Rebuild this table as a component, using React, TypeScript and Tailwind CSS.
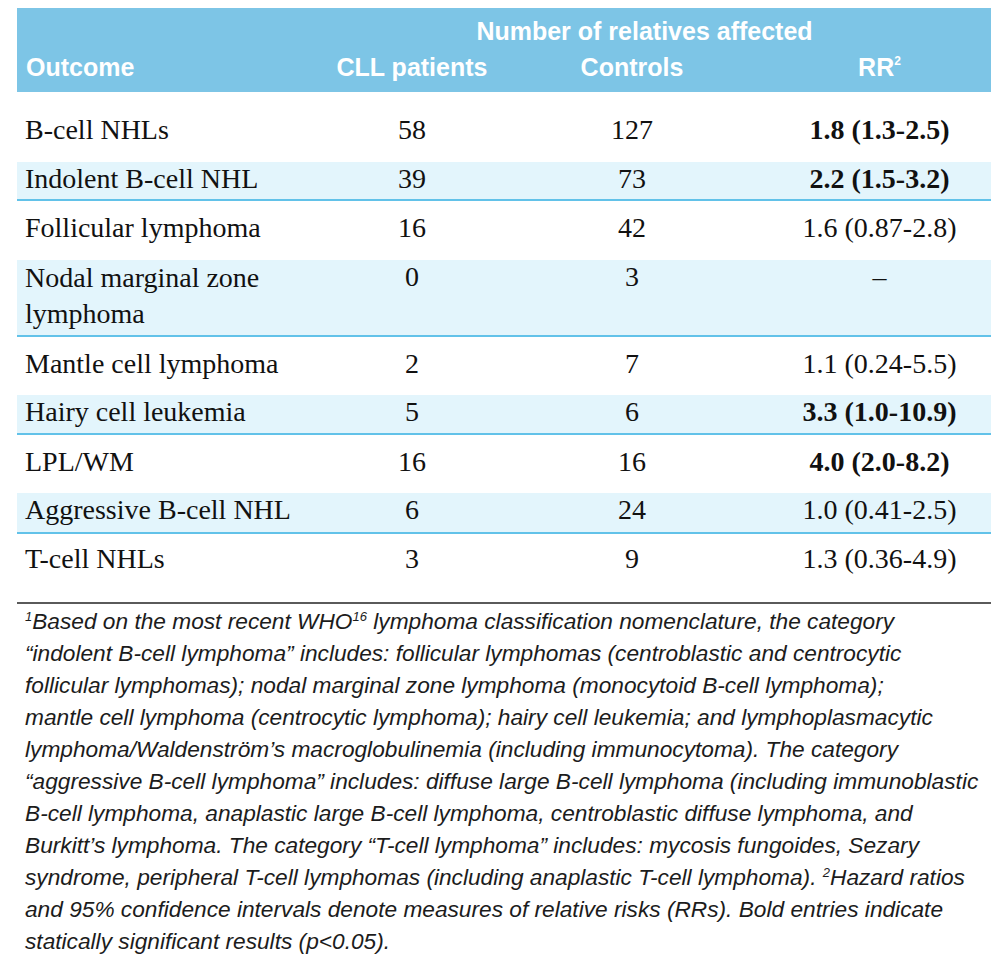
import React from 'react'

type Row = {
  outcome: string
  cll: string
  controls: string
  rr: string
  bold?: boolean
  rowClass: string
}

const rows: Row[] = [
  { outcome: 'B-cell NHLs', cll: '58', controls: '127', rr: '1.8 (1.3-2.5)', bold: true, rowClass: 'h-[70px] pt-[21px]' },
  { outcome: 'Indolent B-cell NHL', cll: '39', controls: '73', rr: '2.2 (1.5-3.2)', bold: true, rowClass: 'h-[39px] bg-[#e3f5fc] border-b-2 border-[#62c2e9]' },
  { outcome: 'Follicular lymphoma', cll: '16', controls: '42', rr: '1.6 (0.87-2.8)', rowClass: 'h-[59px] pt-[10px]' },
  { outcome: 'Nodal marginal zone lymphoma', cll: '0', controls: '3', rr: '\u2013', rowClass: 'h-[77px] bg-[#e3f5fc] border-b-2 border-[#62c2e9]' },
  { outcome: 'Mantle cell lymphoma', cll: '2', controls: '7', rr: '1.1 (0.24-5.5)', rowClass: 'h-[58px] pt-[10px]' },
  { outcome: 'Hairy cell leukemia', cll: '5', controls: '6', rr: '3.3 (1.0-10.9)', bold: true, rowClass: 'h-[40px] bg-[#e3f5fc] border-b-2 border-[#62c2e9]' },
  { outcome: 'LPL/WM', cll: '16', controls: '16', rr: '4.0 (2.0-8.2)', bold: true, rowClass: 'h-[58px] pt-[10px]' },
  { outcome: 'Aggressive B-cell NHL', cll: '6', controls: '24', rr: '1.0 (0.41-2.5)', rowClass: 'h-[41px] bg-[#e3f5fc] border-b-2 border-[#62c2e9]' },
  { outcome: 'T-cell NHLs', cll: '3', controls: '9', rr: '1.3 (0.36-4.9)', rowClass: 'h-[68px] pt-[8px]' },
]

const cols = 'grid grid-cols-[285px_220px_220px_245px]'

export default function App() {
  return (
    <div className="w-[1008px] h-[978px] bg-white px-[17px] pt-[8px] overflow-hidden">
      {/* header */}
      <div
        className={`${cols} bg-[#7dc5e6] text-white font-bold text-[25px] leading-[36px] pt-[5px] pb-[7px] font-['Liberation_Sans',Arial,sans-serif]`}
      >
        <div className="col-start-2 col-span-3 text-center">Number of relatives affected</div>
        <div className="pl-[9px]">Outcome</div>
        <div className="text-center">CLL patients</div>
        <div className="text-center">Controls</div>
        <div className="text-center pl-[30px]">
          RR<sup className="text-[12px] -top-[0.9em]">2</sup>
        </div>
      </div>

      {/* body */}
      <div className="font-['Liberation_Serif','Times_New_Roman',serif] text-[28px] leading-[34px] text-[#111]">
        {rows.map((r) => (
          <div key={r.outcome} className={`${cols} ${r.rowClass}`}>
            <div className={`pl-[8px] pr-[4px] ${r.outcome.length > 24 ? 'leading-[36px]' : ''}`}>{r.outcome}</div>
            <div className="text-center">{r.cll}</div>
            <div className="text-center">{r.controls}</div>
            <div className={`text-center pl-[30px] ${r.bold ? 'font-bold' : ''}`}>{r.rr}</div>
          </div>
        ))}
      </div>

      {/* footnote */}
      <div className="border-t-2 border-[#5a5a5a] pt-[1px] pl-[8px] font-['Liberation_Sans',Arial,sans-serif] italic text-[22.7px] leading-[32px] text-[#1c1c1c] whitespace-nowrap">
        <sup className="text-[13px] -top-[0.6em]">1</sup>Based on the most recent WHO<sup className="text-[13px] -top-[0.6em]">16</sup> lymphoma classification nomenclature, the category
        <br />
        “indolent B-cell lymphoma” includes: follicular lymphomas (centroblastic and centrocytic
        <br />
        follicular lymphomas); nodal marginal zone lymphoma (monocytoid B-cell lymphoma);
        <br />
        mantle cell lymphoma (centrocytic lymphoma); hairy cell leukemia; and lymphoplasmacytic
        <br />
        lymphoma/Waldenström’s macroglobulinemia (including immunocytoma). The category
        <br />
        “aggressive B-cell lymphoma” includes: diffuse large B-cell lymphoma (including immunoblastic
        <br />
        B-cell lymphoma, anaplastic large B-cell lymphoma, centroblastic diffuse lymphoma, and
        <br />
        Burkitt’s lymphoma. The category “T-cell lymphoma” includes: mycosis fungoides, Sezary
        <br />
        syndrome, peripheral T-cell lymphomas (including anaplastic T-cell lymphoma). <sup className="text-[13px] -top-[0.6em]">2</sup>Hazard ratios
        <br />
        and 95% confidence intervals denote measures of relative risks (RRs). Bold entries indicate
        <br />
        statically significant results (p&lt;0.05).
      </div>
    </div>
  )
}
